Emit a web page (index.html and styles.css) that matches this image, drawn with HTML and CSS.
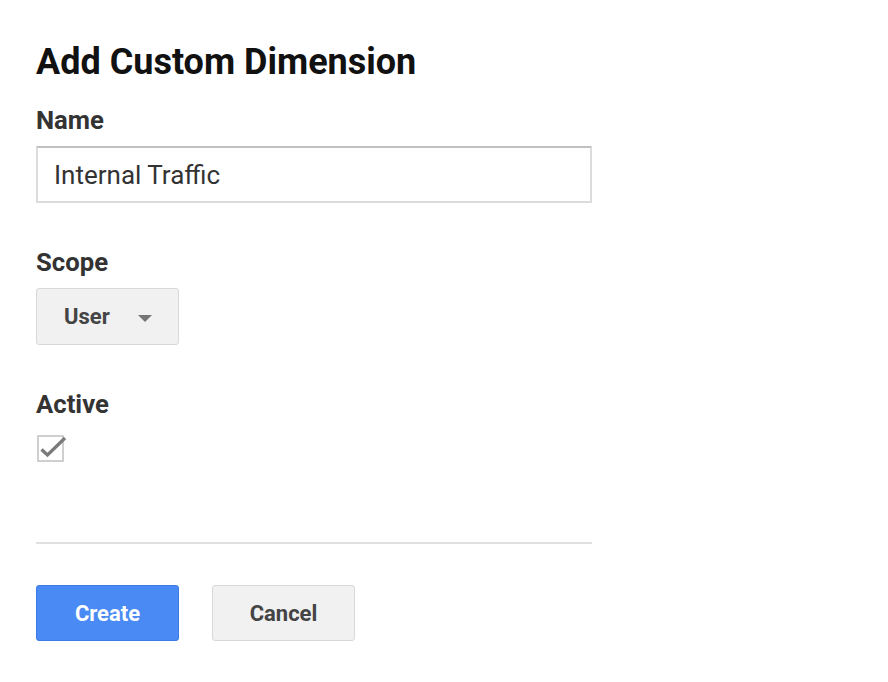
FILE: index.html
```html
<!DOCTYPE html>
<html>
<head>
<meta charset="utf-8">
<link rel="stylesheet" href="styles.css">
</head>
<body>
<div class="page">
  <h1 class="title">Add Custom Dimension</h1>
  <div class="field">
    <div class="label">Name</div>
    <div class="input">Internal Traffic</div>
  </div>
  <div class="field field-gap">
    <div class="label">Scope</div>
    <div class="select"><span class="select-text">User</span><span class="caret"></span></div>
  </div>
  <div class="field field-gap">
    <div class="label">Active</div>
    <div class="checkbox">
      <svg width="32" height="32" viewBox="0 0 32 32">
        <rect x="1" y="4" width="25" height="25" fill="#fff" stroke="#c4c4c4" stroke-width="1.6"/>
        <path d="M4.5 17.5 L10.5 23 L28 6" fill="none" stroke="#7a7a7a" stroke-width="3.2"/>
      </svg>
    </div>
  </div>
  <div class="divider"></div>
  <div class="actions">
    <button class="btn btn-primary">Create</button>
    <button class="btn btn-default">Cancel</button>
  </div>
</div>
</body>
</html>
```

FILE: styles.css
```css
html, body {
  margin: 0;
  padding: 0;
  background: #fff;
}
body {
  font-family: Roboto, "Liberation Sans", Arial, sans-serif;
}
.page {
  padding: 40px 36px 0 36px;
}
.title {
  margin: 0;
  font-size: 36px;
  line-height: 44px;
  font-weight: 700;
  color: #111;
}
.field {
  margin-top: 22px;
  display: flex;
  flex-direction: column;
  align-items: flex-start;
}
.field-gap {
  margin-top: 45px;
}
.label {
  font-size: 25.7px;
  line-height: 28px;
  font-weight: 700;
  color: #333;
  margin-bottom: 12px;
}
.input {
  box-sizing: border-box;
  width: 556px;
  height: 57px;
  border: 2px solid #dcdcdc;
  border-top-color: #c0c0c0;
  padding: 0 16px;
  display: flex;
  align-items: center;
  font-size: 26px;
  color: #333;
}
.select {
  box-sizing: border-box;
  width: 143px;
  height: 57px;
  background: #f1f1f1;
  border: 1.5px solid #d8d8d8;
  border-radius: 3px;
  display: flex;
  align-items: center;
  padding-left: 27px;
}
.select-text {
  font-size: 22px;
  font-weight: 700;
  color: #444;
}
.caret {
  margin-left: 28px;
  width: 0;
  height: 0;
  border-left: 7px solid transparent;
  border-right: 7px solid transparent;
  border-top: 7px solid #757575;
  margin-top: 4px;
}
.checkbox {
  margin-top: 2px;
  margin-left: 1px;
  height: 32px;
}
.checkbox svg {
  display: block;
}
.divider {
  margin-top: 78px;
  width: 556px;
  height: 2px;
  background: #e0e0e0;
}
.actions {
  margin-top: 41px;
  display: flex;
  gap: 33px;
}
.btn {
  box-sizing: border-box;
  width: 143px;
  height: 56px;
  border-radius: 3px;
  font-family: Roboto, "Liberation Sans", Arial, sans-serif;
  font-size: 22px;
  font-weight: 700;
  padding: 0;
  cursor: pointer;
}
.btn-primary {
  background: #4a8af4;
  border: 1.5px solid #3d7ae6;
  color: #fff;
}
.btn-default {
  background: #f1f1f1;
  border: 1.5px solid #d8d8d8;
  color: #444;
}
```
